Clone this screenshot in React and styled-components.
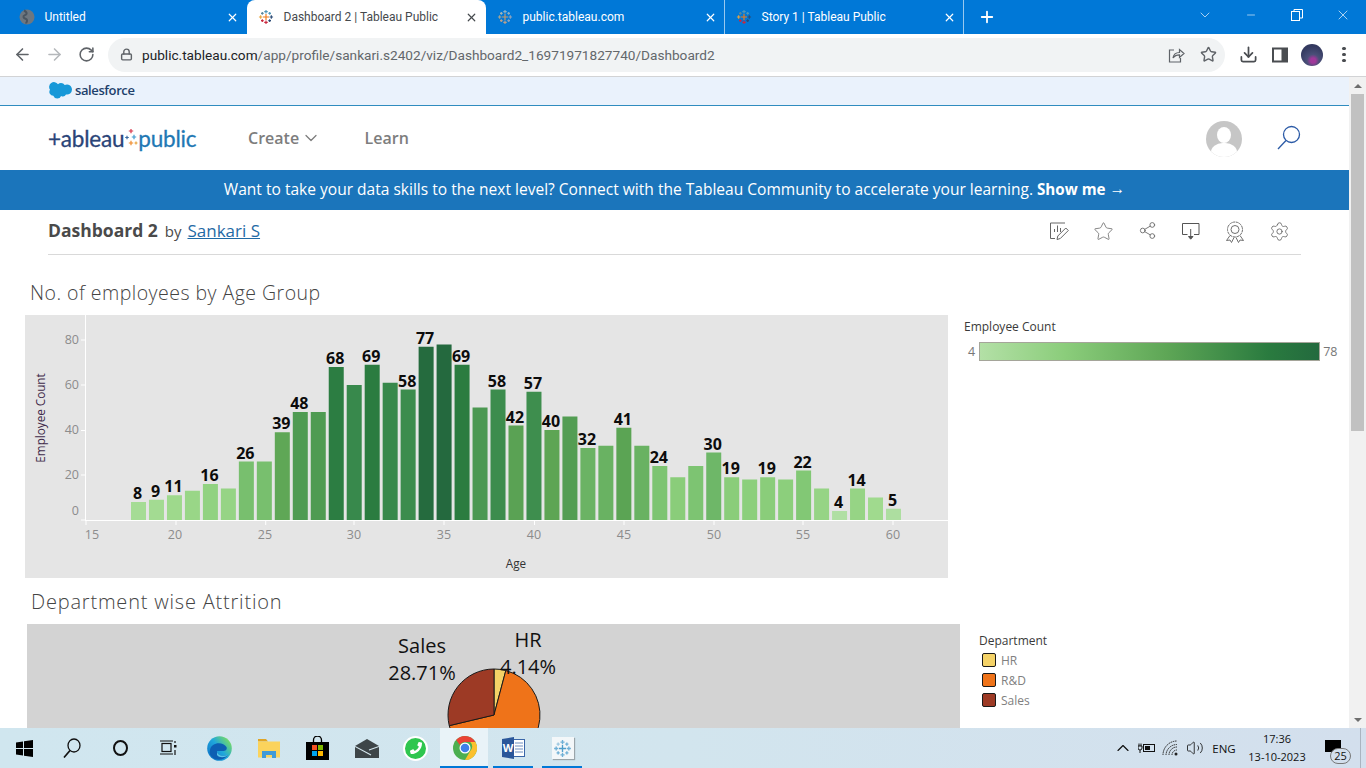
import React from 'react'
import styled, { createGlobalStyle } from 'styled-components'
import {
  ArrowLeft,
  ArrowRight,
  RotateCw,
  Lock,
  Star,
  Download,
  X,
  Plus,
  ChevronDown,
  ChevronUp,
  Minus,
  Share2,
  Settings,
  Volume2,
} from 'lucide-react'
import { FaPhoneAlt } from 'react-icons/fa'

const UI_FONT = '"Open Sans", "Noto Sans", sans-serif'

const tabs = [
  { title: 'Untitled', icon: 'globe' },
  { title: 'Dashboard 2 | Tableau Public', icon: 'color', active: true },
  { title: 'public.tableau.com', icon: 'muted', divider: true },
  { title: 'Story 1 | Tableau Public', icon: 'color', divider: true },
]

const ages = [
  8, 9, 11, 13, 16, 14, 26, 26, 39, 48, 48, 68, 60, 69, 61, 58, 77, 78, 69, 50, 58, 42, 57, 40, 46,
  32, 33, 41, 33, 24, 19, 24, 30, 19, 18, 19, 18, 22, 14, 4, 14, 10, 5,
]
const labelled = [18, 19, 20, 22, 24, 26, 27, 29, 31, 33, 34, 36, 38, 39, 40, 41, 43, 45, 47, 50, 51, 53, 55, 57, 58, 60]

const scale = [
  [4, [176, 223, 163]],
  [10, [160, 218, 142]],
  [20, [135, 204, 120]],
  [30, [110, 183, 104]],
  [40, [93, 165, 84]],
  [50, [76, 152, 82]],
  [60, [56, 137, 76]],
  [70, [41, 122, 63]],
  [78, [36, 105, 62]],
]

const colorFor = (v) => {
  for (let i = 1; i < scale.length; i++) {
    if (v <= scale[i][0]) {
      const [v0, c0] = scale[i - 1]
      const [v1, c1] = scale[i]
      const t = (v - v0) / (v1 - v0)
      return `rgb(${c0.map((c, k) => Math.round(c + (c1[k] - c) * t)).join(',')})`
    }
  }
  return 'rgb(36,105,62)'
}

const xTicks = [
  [15, 61, 67],
  [20, 151, 150],
  [25, 240.7, 240],
  [30, 329, 329],
  [35, 419, 419],
  [40, 509.5, 509],
  [45, 599, 599],
  [50, 689, 689],
  [55, 778, 778],
  [60, 868, 868],
]
const yTicks = [
  [80, 25, 24],
  [60, 70, 69],
  [40, 115.5, 114],
  [20, 160, 159],
  [0, 205, 195],
]

const AgeChart = () => (
  <ChartSvg width="923" height="263" viewBox="0 0 923 263">
    <line x1="60.5" y1="0" x2="60.5" y2="205" stroke="#fff" />
    <line x1="60" y1="205.5" x2="923" y2="205.5" stroke="#fff" />
    {xTicks.map(([label, tick, text]) => (
      <g key={label}>
        <line x1={tick} y1="205" x2={tick} y2="210" stroke="#fff" />
        <TickLabel x={text} y="224" textAnchor="middle">{label}</TickLabel>
      </g>
    ))}
    {yTicks.map(([label, tick, text]) => (
      <g key={label}>
        <line x1="56" y1={tick} x2="60" y2={tick} stroke="#fff" />
        <TickLabel x="54" y={text + 4.5} textAnchor="end">{label}</TickLabel>
      </g>
    ))}
    {ages.map((v, i) => {
      const x = 106 + i * 17.976
      const h = v * 2.25
      return <rect key={i} x={x} y={205 - h} width="15" height={h} fill={colorFor(v)} />
    })}
    {ages.map((v, i) =>
      labelled.includes(i + 18) ? (
        <BarLabel key={i} x={106 + i * 17.976 + 6.5} y={205 - v * 2.25 - 3} textAnchor="middle">
          {v}
        </BarLabel>
      ) : null,
    )}
    <AxisTitle x="0" y="0" textAnchor="middle" transform="translate(20 103) rotate(-90)" fill="#3f2b4a">
      Employee Count
    </AxisTitle>
    <AxisTitle x="491" y="253" textAnchor="middle" fill="#333">
      Age
    </AxisTitle>
  </ChartSvg>
)

const wedge = (cx, cy, r, from, to) => {
  const p = (d) => [cx + r * Math.sin((d * Math.PI) / 180), cy - r * Math.cos((d * Math.PI) / 180)]
  const [x0, y0] = p(from)
  const [x1, y1] = p(to)
  return `M${cx} ${cy}L${x0} ${y0}A${r} ${r} 0 ${to - from > 180 ? 1 : 0} 1 ${x1} ${y1}Z`
}

const PieChart = () => (
  <ChartSvg width="933" height="160" viewBox="0 0 933 160">
    <path d={wedge(467, 91, 46, 0, 14.9)} fill="#f4d267" stroke="#1a1a1a" />
    <path d={wedge(467, 91, 46, 14.9, 256.6)} fill="#ef7319" stroke="#1a1a1a" />
    <path d={wedge(467, 91, 46, 256.6, 360)} fill="#9d3a25" stroke="#1a1a1a" />
    <PieLabel x="395" y="29" textAnchor="middle">Sales</PieLabel>
    <PieLabel x="395" y="56" textAnchor="middle">28.71%</PieLabel>
    <PieLabel x="501" y="23" textAnchor="middle">HR</PieLabel>
    <PieLabel x="501" y="50" textAnchor="middle">4.14%</PieLabel>
  </ChartSvg>
)

const crossSpots = [
  [12, 12, 4.5, 0],
  [12, 4, 2.6, 1],
  [12, 20, 2.6, 2],
  [4, 12, 2.6, 3],
  [20, 12, 2.6, 4],
  [6.5, 6.5, 2, 5],
  [17.5, 6.5, 2, 1],
  [6.5, 17.5, 2, 2],
  [17.5, 17.5, 2, 4],
]

const TableauMark = ({ size = 16, palette }) => (
  <svg width={size} height={size} viewBox="0 0 24 24" fill="none" strokeWidth="1.7">
    {crossSpots.map(([x, y, r, c]) => (
      <path key={`${x}-${y}`} d={`M${x - r} ${y}H${x + r}M${x} ${y - r}V${y + r}`} stroke={palette[c]} />
    ))}
  </svg>
)

const colorPalette = ['#ef7a1a', '#4f97b8', '#c9283e', '#e8a33d', '#2a4a75', '#59879b']
const mutedPalette = ['#c79a6b', '#8db0c4', '#b9a08c', '#a9a68f', '#8da3bd', '#a5b5b5']
const bluePalette = ['#4f9ecb', '#6fb0d6', '#6fb0d6', '#6fb0d6', '#6fb0d6', '#9cc7e0']

const TabIcon = ({ kind }) => {
  if (kind === 'globe') {
    return (
      <svg width="16" height="16" viewBox="0 0 16 16">
        <circle cx="8" cy="8" r="7.5" fill="#6e7780" />
        <path d="M5 1.5c2 1 3 2 2.5 3.5S4 6 4.5 8s3 1.5 3.5 3-1 3-1 3.5" stroke="#4a5560" fill="none" strokeWidth="2" />
      </svg>
    )
  }
  return <TableauMark palette={kind === 'muted' ? mutedPalette : colorPalette} />
}

const SalesforceCloud = () => (
  <svg width="24" height="17" viewBox="0 0 24 17">
    <path
      d="M10 2.2A4.2 4.2 0 0 1 13 1a4.2 4.2 0 0 1 3.7 2.1A5 5 0 0 1 24 7.6a5 5 0 0 1-6 4.9 3.7 3.7 0 0 1-4.9 1.5A4.2 4.2 0 0 1 5.3 13.8 3.9 3.9 0 0 1 2 7.8a4.5 4.5 0 0 1 8-5.6z"
      fill="#1798d8"
    />
  </svg>
)

const logoSpark = [
  [7, 2, 2.2, '#d8354a'],
  [3, 8.5, 1.8, '#3b6aa0'],
  [10, 8, 2.2, '#3f9bd0'],
  [7, 14, 2.2, '#ef8a2b'],
  [12, 14, 1.5, '#e8a33d'],
]

const LogoSpark = () => (
  <svg width="14" height="18" viewBox="0 0 14 18" fill="none" strokeWidth="1.2">
    {logoSpark.map(([x, y, r, c]) => (
      <path key={`${x}-${y}`} d={`M${x - r} ${y}H${x + r}M${x} ${y - r}V${y + r}`} stroke={c} />
    ))}
  </svg>
)

const SiteSearchIcon = () => (
  <svg width="24" height="25" viewBox="0 0 24 25" fill="none" stroke="#2b5aa6" strokeWidth="1.3">
    <circle cx="14.5" cy="9.5" r="8" />
    <path d="M9 15.5 1 24" />
  </svg>
)

const EditChartIcon = () => (
  <svg width="20" height="20" viewBox="0 0 20 20" fill="none" stroke="#666" strokeWidth="1">
    <path d="M16 2H1.5v15.5H6" />
    <path d="M5.5 11V8M8.5 11V4.5M11.5 11V7" />
    <path d="M8 18.5l.8-3.5 8-8 2.5 2.5-8 8z" />
  </svg>
)

const ScreenDownloadIcon = () => (
  <svg width="20" height="20" viewBox="0 0 20 20" fill="none" stroke="#555" strokeWidth="1">
    <path d="M6.5 13.5H1.5V2.5h16.5v11h-5" />
    <path d="M9.7 8v9" />
    <path d="M7.5 15.5h4.5L9.7 18.2z" fill="#555" />
  </svg>
)

const RibbonIcon = () => (
  <svg width="20" height="22" viewBox="0 0 20 22" fill="none" stroke="#707070" strokeWidth="1">
    <circle cx="10" cy="8.5" r="7.5" strokeDasharray="3 .6" />
    <circle cx="10" cy="8.5" r="4" />
    <path d="M5 14.5 1.5 19.5l3.5-.5 1.5 2.5 2.5-5" />
    <path d="M15 14.5l3.5 5-3.5-.5-1.5 2.5-2.5-5" />
  </svg>
)

const ChromeShareIcon = () => (
  <svg width="18" height="18" viewBox="0 0 18 18" fill="none" stroke="#5f6368" strokeWidth="1.2">
    <path d="M7 4H2.5v12h11v-4" />
    <path d="M6 12c.5-3.5 3-5.5 6.5-5.5V3.5L17 7.5l-4.5 4V8.8C9.8 8.8 7.5 9.8 6 12z" />
  </svg>
)

const SidePanelIcon = () => (
  <svg width="16" height="16" viewBox="0 0 16 16">
    <rect x="1" y="1.5" width="14" height="13" fill="none" stroke="#4a4d51" strokeWidth="2" />
    <rect x="9.5" y="1.5" width="5" height="13" fill="#4a4d51" />
  </svg>
)

const RestoreIcon = () => (
  <svg width="12" height="12" viewBox="0 0 12 12" fill="none" stroke="#fff" strokeWidth="1">
    <rect x="0.5" y="2.5" width="8" height="9" />
    <path d="M3 2.5V.5h8.5v8.5H8.5" />
  </svg>
)

const WindowsIcon = () => (
  <svg width="17" height="17" viewBox="0 0 17 17" fill="#000">
    <path d="M0 2.5 7 1.5v6.5H0zM8 1.3 17 0v8H8zM0 9h7v6.5l-7-1zM8 9h9v8l-9-1.3z" />
  </svg>
)

const TaskSearchIcon = () => (
  <svg width="18" height="20" viewBox="0 0 18 20" fill="none" stroke="#111" strokeWidth="1.3">
    <ellipse cx="11" cy="7.5" rx="6" ry="6.5" />
    <path d="M7 12.5 1 19.5" strokeWidth="1.7" />
  </svg>
)

const TaskViewIcon = () => (
  <svg width="18" height="18" viewBox="0 0 18 18" fill="none" stroke="#111" strokeWidth="1.2">
    <rect x="3" y="4.5" width="9" height="8" />
    <path d="M1 2h13M1 15h13M16 2v2M16 11v5" />
    <rect x="15" y="6" width="2.5" height="2.5" fill="#111" stroke="none" />
  </svg>
)

const EdgeIcon = () => (
  <svg width="25" height="25" viewBox="0 0 25 25">
    <defs>
      <linearGradient id="edgeFill" x1="0" y1="1" x2="1" y2="0.2">
        <stop offset="0" stopColor="#0d6fc6" />
        <stop offset="0.55" stopColor="#1fa7dc" />
        <stop offset="1" stopColor="#7ee05c" />
      </linearGradient>
    </defs>
    <circle cx="12.5" cy="12.5" r="12.3" fill="url(#edgeFill)" />
    <path d="M3 14C4 6 16 5 19.5 11c1 3-1.5 4-3.5 4h-6c0 4 5 6 11 4-3 5-11 6-15 3-3-2-4-5-3-8z" fill="#0d5fb3" />
    <path d="M10 15c0 4 5 6 11 4-3 3-9 3-11 0z" fill="#5ac4e6" />
  </svg>
)

const FolderIcon = () => (
  <svg width="22" height="20" viewBox="0 0 22 20">
    <path d="M0 1h8l2 2.5H0z" fill="#e0a526" />
    <rect x="0" y="3.5" width="22" height="16" fill="#fbd35c" />
    <path d="M4 13h14v7h-4v-3H8v3H4z" fill="#3f9ad8" />
  </svg>
)

const StoreIcon = () => (
  <svg width="23" height="24" viewBox="0 0 23 24">
    <path d="M7.5 8V4a4 4 0 0 1 8 0v4" stroke="#000" strokeWidth="1.3" fill="none" />
    <rect y="6" width="23" height="18" fill="#000" />
    <rect x="6" y="9" width="5" height="5" fill="#f25022" />
    <rect x="12" y="9" width="5" height="5" fill="#7fba00" />
    <rect x="6" y="15" width="5" height="5" fill="#00a4ef" />
    <rect x="12" y="15" width="5" height="5" fill="#ffb900" />
  </svg>
)

const MailIcon = () => (
  <svg width="24" height="19" viewBox="0 0 24 19">
    <path d="M0 7 12 0l12 7v12H0z" fill="#3d4548" />
    <path d="M0 7.5 16 16M14 11l10-3.5" stroke="#d6e8ef" strokeWidth="1.1" fill="none" />
  </svg>
)

const ChromeIcon = () => (
  <svg width="24" height="24" viewBox="0 0 24 24">
    <circle cx="12" cy="12" r="12" fill="#4caf50" />
    <path d="M12 0a12 12 0 0 1 10.4 6H12a6 6 0 0 0-5.2 3L3.200 3.900A12 12 0 0 1 12 0z" fill="#ea4335" />
    <path d="M22.4 6A12 12 0 0 1 12 24l5.2-9a6 6 0 0 0 0-9z" fill="#fbc02d" />
    <circle cx="12" cy="12" r="5.5" fill="#fff" />
    <circle cx="12" cy="12" r="4.3" fill="#3f7fe8" />
  </svg>
)

const WordIcon = () => (
  <svg width="23" height="22" viewBox="0 0 23 22">
    <rect x="11" y="2.5" width="11.5" height="17" fill="#fff" stroke="#3a66a8" />
    <path d="M13 6h8M13 9h8M13 12h8M13 15h8" stroke="#6f8fc0" />
    <path d="M0 2 12 0v22L0 20z" fill="#2b579a" />
    <WordLetter x="6" y="15" textAnchor="middle">W</WordLetter>
  </svg>
)

const BatteryIcon = () => (
  <svg width="18" height="16" viewBox="0 0 18 16" fill="none" stroke="#111" strokeWidth="1">
    <rect x="5.5" y="4.5" width="11" height="7" />
    <rect x="7" y="6" width="5" height="4" fill="#111" stroke="none" />
    <path d="M0 6h4v2a2 2 0 0 1-4 0zM1 3.5V6M3 3.5V6M2 10v3" />
  </svg>
)

const WifiIcon = () => (
  <svg width="18" height="16" viewBox="0 0 18 16" fill="none" stroke="#222" strokeWidth="1" strokeDasharray="1.5 .7">
    <path d="M1 15a14 14 0 0 1 14-14M4 15A11 11 0 0 1 15 4.5M7 15a8 8 0 0 1 8-8M10 15a5 5 0 0 1 5-5" />
    <circle cx="14" cy="14" r="1.5" fill="#222" stroke="none" />
  </svg>
)

const App = () => (
  <>
    <GlobalStyle />
    <Screen>
      <TabStrip>
        {tabs.map((tab) => (
          <Tab key={tab.title} $active={tab.active} $divider={tab.divider}>
            <TabFavicon>
              <TabIcon kind={tab.icon} />
            </TabFavicon>
            <TabTitle>{tab.title}</TabTitle>
            <TabClose>
              <X size={13} strokeWidth={2.2} />
            </TabClose>
          </Tab>
        ))}
        <NewTab>
          <Plus size={18} strokeWidth={2.4} />
        </NewTab>
        <WindowControls>
          <WindowButton>
            <ChevronDown size={16} strokeWidth={1} />
          </WindowButton>
          <WindowButton>
            <Minus size={12} strokeWidth={1.2} />
          </WindowButton>
          <WindowButton>
            <RestoreIcon />
          </WindowButton>
          <WindowButton>
            <X size={16} strokeWidth={1} />
          </WindowButton>
        </WindowControls>
      </TabStrip>

      <Toolbar>
        <NavButton>
          <ArrowLeft size={19} strokeWidth={2} />
        </NavButton>
        <NavButton $disabled>
          <ArrowRight size={19} strokeWidth={2} />
        </NavButton>
        <NavButton>
          <RotateCw size={17} strokeWidth={2.2} />
        </NavButton>
        <Omnibox>
          <Lock size={13} strokeWidth={2.6} color="#5f6368" />
          <UrlText>
            <UrlHost>public.tableau.com</UrlHost>/app/profile/sankari.s2402/viz/Dashboard2_16971971827740/Dashboard2
          </UrlText>
          <OmniActions>
            <ChromeShareIcon />
            <Star size={17} strokeWidth={2} color="#5f6368" />
          </OmniActions>
        </Omnibox>
        <ToolbarIcons>
          <ToolbarIcon>
            <Download size={19} strokeWidth={2.2} color="#4a4d51" />
          </ToolbarIcon>
          <ToolbarIcon>
            <SidePanelIcon />
          </ToolbarIcon>
          <ToolbarIcon>
            <ProfilePhoto />
          </ToolbarIcon>
          <ToolbarIcon>
            <Kebab />
          </ToolbarIcon>
        </ToolbarIcons>
      </Toolbar>

      <Viewport>
        <Page>
          <SalesforceBar>
            <SalesforceCloud />
            <SalesforceName>salesforce</SalesforceName>
          </SalesforceBar>

          <SiteHeader>
            <Logo>
              <LogoWord>+ableau</LogoWord>
              <LogoSpark />
              <LogoWord $light>public</LogoWord>
            </Logo>
            <SiteNav>
              <NavLink>
                Create
                <ChevronDown size={20} strokeWidth={1.5} />
              </NavLink>
              <NavLink>Learn</NavLink>
            </SiteNav>
            <HeaderRight>
              <UserAvatar>
                <UserHead />
                <UserBody />
              </UserAvatar>
              <HeaderSearch>
                <SiteSearchIcon />
              </HeaderSearch>
            </HeaderRight>
          </SiteHeader>

          <Banner>
            Want to take your data skills to the next level? Connect with the Tableau Community to accelerate your learning.
            <strong>Show me</strong>
            <BannerArrow>→</BannerArrow>
          </Banner>

          <TitleRow>
            <VizName>
              <strong>Dashboard 2</strong>
              <By>by</By>
              <AuthorLink href="#">Sankari S</AuthorLink>
            </VizName>
            <VizActions>
              <VizAction>
                <EditChartIcon />
              </VizAction>
              <VizAction>
                <Star size={21} strokeWidth={0.9} />
              </VizAction>
              <VizAction>
                <Share2 size={19} strokeWidth={1.1} />
              </VizAction>
              <VizAction>
                <ScreenDownloadIcon />
              </VizAction>
              <VizAction>
                <RibbonIcon />
              </VizAction>
              <VizAction>
                <Settings size={21} strokeWidth={1} />
              </VizAction>
            </VizActions>
          </TitleRow>

          <SectionTitle>No. of employees by Age Group</SectionTitle>
          <ChartRow>
            <AgePanel>
              <AgeChart />
            </AgePanel>
            <CountLegend>
              <LegendTitle>Employee Count</LegendTitle>
              <RampRow>
                <RampValue>4</RampValue>
                <Ramp />
                <RampValue>78</RampValue>
              </RampRow>
            </CountLegend>
          </ChartRow>

          <SectionTitle $second>Department wise Attrition</SectionTitle>
          <ChartRow>
            <PiePanel>
              <PieChart />
            </PiePanel>
            <DeptLegend>
              <LegendTitle>Department</LegendTitle>
              <LegendItems>
                <LegendItem><Swatch $color="#f4d267" />HR</LegendItem>
                <LegendItem><Swatch $color="#ef7319" />R&amp;D</LegendItem>
                <LegendItem><Swatch $color="#9d3a25" />Sales</LegendItem>
              </LegendItems>
            </DeptLegend>
          </ChartRow>
        </Page>
        <Scrollbar>
          <ScrollArrow />
          <ScrollThumb />
          <ScrollArrow $down />
        </Scrollbar>
      </Viewport>

      <Taskbar>
        <TaskSlot $narrow><WindowsIcon /></TaskSlot>
        <TaskSlot $narrow><TaskSearchIcon /></TaskSlot>
        <TaskSlot $narrow><CortanaRing /></TaskSlot>
        <TaskSlot $narrow><TaskViewIcon /></TaskSlot>
        <TaskGap />
        <TaskSlot><EdgeIcon /></TaskSlot>
        <TaskSlot><FolderIcon /></TaskSlot>
        <TaskSlot><StoreIcon /></TaskSlot>
        <TaskSlot><MailIcon /></TaskSlot>
        <TaskSlot>
          <WhatsAppBadge>
            <FaPhoneAlt />
          </WhatsAppBadge>
        </TaskSlot>
        <TaskSlot $open $active><ChromeIcon /></TaskSlot>
        <TaskSlot $open><WordIcon /></TaskSlot>
        <TaskSlot $open>
          <TableauTile>
            <TableauMark size={19} palette={bluePalette} />
          </TableauTile>
        </TaskSlot>
        <Tray>
          <TrayItem><ChevronUp size={20} strokeWidth={1.4} /></TrayItem>
          <TrayItem><BatteryIcon /></TrayItem>
          <TrayItem><WifiIcon /></TrayItem>
          <TrayItem><Volume2 size={18} strokeWidth={1.1} /></TrayItem>
          <TrayText>ENG</TrayText>
          <Clock>
            <span>17:36</span>
            <span>13-10-2023</span>
          </Clock>
          <Notify>
            <NotifyBubble />
            <NotifyCount>25</NotifyCount>
          </Notify>
        </Tray>
      </Taskbar>
    </Screen>
  </>
)

export default App

const GlobalStyle = createGlobalStyle`
  html, body {
    margin: 0;
    padding: 0;
    background: #fff;
    overflow: hidden;
  }
  * {
    box-sizing: border-box;
  }
`

const Screen = styled.div`
  width: 1366px;
  height: 768px;
  display: flex;
  flex-direction: column;
  overflow: hidden;
  font-family: ${UI_FONT};
`

const TabStrip = styled.div`
  height: 34px;
  flex: none;
  display: flex;
  padding-left: 8px;
  background: #0078d7;
`

const Tab = styled.div`
  width: 239px;
  flex: none;
  display: flex;
  align-items: center;
  padding: 0 8px 0 11px;
  color: ${({ $active }) => ($active ? '#45494d' : '#fff')};
  background: ${({ $active }) => ($active ? '#fff' : 'transparent')};
  border-radius: ${({ $active }) => ($active ? '8px 8px 0 0' : '0')};
  box-shadow: ${({ $divider }) => ($divider ? 'inset -1px 0 0 rgba(255, 255, 255, 0.6)' : 'none')};
`

const TabFavicon = styled.span`
  display: flex;
  width: 25.5px;
  flex: none;
`

const TabTitle = styled.span`
  flex: 1;
  font-family: Roboto, sans-serif;
  font-size: 12px;
  white-space: nowrap;
`

const TabClose = styled.span`
  display: flex;
`

const NewTab = styled.div`
  width: 46px;
  display: flex;
  align-items: center;
  justify-content: center;
  color: #fff;
`

const WindowControls = styled.div`
  margin-left: auto;
  display: flex;
  height: 30px;
`

const WindowButton = styled.div`
  width: 46px;
  display: flex;
  align-items: center;
  justify-content: center;
  color: #fff;
`

const Toolbar = styled.div`
  height: 43px;
  flex: none;
  display: flex;
  align-items: center;
  padding: 0 0 1px 6px;
  background: #fff;
  border-bottom: 1px solid #d2d3d5;
`

const NavButton = styled.div`
  width: 32px;
  display: flex;
  justify-content: center;
  color: ${({ $disabled }) => ($disabled ? '#b5b8bb' : '#5f6368')};
`

const Omnibox = styled.div`
  width: 1117px;
  height: 34px;
  margin-left: 6px;
  display: flex;
  align-items: center;
  padding: 0 8px 0 12px;
  border-radius: 17px;
  background: #f1f3f4;
`

const UrlText = styled.div`
  margin-left: 9px;
  font-family: Roboto, sans-serif;
  font-size: 13.63px;
  color: #63676b;
  white-space: nowrap;
`

const UrlHost = styled.span`
  color: #202124;
`

const OmniActions = styled.div`
  margin-left: auto;
  display: flex;
  align-items: center;
  gap: 15px;
`

const ToolbarIcons = styled.div`
  display: flex;
  margin-left: 7px;
`

const ToolbarIcon = styled.div`
  width: 32px;
  display: flex;
  justify-content: center;
  align-items: center;
`

const ProfilePhoto = styled.div`
  width: 22px;
  height: 22px;
  border-radius: 50%;
  background: radial-gradient(circle at 55% 75%, #a0379a 0 12%, #4a4f78 30%, #33395f 70%);
`

const Kebab = styled.div`
  width: 3.5px;
  height: 3.5px;
  border-radius: 50%;
  background: #4a4d51;
  box-shadow: 0 -6px 0 #4a4d51, 0 6px 0 #4a4d51;
`

const Viewport = styled.div`
  flex: 1;
  min-height: 0;
  display: flex;
`

const Page = styled.div`
  flex: 1;
  min-width: 0;
  overflow: hidden;
  background: #fff;
`

const SalesforceBar = styled.div`
  height: 29px;
  display: flex;
  align-items: center;
  gap: 3px;
  padding: 0 0 2px 48px;
  background: #eaf2fc;
  border-bottom: 1px solid #2f8cbf;
`

const SalesforceName = styled.span`
  font-size: 13px;
  font-weight: 600;
  letter-spacing: -0.4px;
  color: #1d3f6b;
`

const SiteHeader = styled.header`
  height: 64px;
  display: flex;
  align-items: center;
  padding: 0 48px;
`

const Logo = styled.div`
  width: 200px;
  display: flex;
  align-items: center;
`

const LogoWord = styled.span`
  font-family: Lato, sans-serif;
  font-size: 22.5px;
  letter-spacing: -0.2px;
  -webkit-text-stroke: 0.3px currentColor;
  color: ${({ $light }) => ($light ? '#1f78b4' : '#2a4478')};
`

const SiteNav = styled.nav`
  display: flex;
  gap: 43.5px;
`

const NavLink = styled.a`
  display: flex;
  align-items: center;
  gap: 2px;
  font-size: 16px;
  font-weight: 600;
  color: #7d7d7d;
`

const HeaderRight = styled.div`
  margin-left: auto;
  display: flex;
  align-items: center;
  gap: 35px;
`

const UserAvatar = styled.div`
  position: relative;
  width: 36px;
  height: 36px;
  margin-top: 2px;
  border-radius: 50%;
  overflow: hidden;
  background: #c6c6c6;
`

const UserHead = styled.div`
  position: absolute;
  left: 11px;
  top: 6px;
  width: 14px;
  height: 16px;
  border-radius: 50%;
  background: #fff;
`

const UserBody = styled.div`
  position: absolute;
  left: 5px;
  top: 22px;
  width: 26px;
  height: 20px;
  border-radius: 45% 45% 0 0;
  background: #fff;
`

const HeaderSearch = styled.div`
  display: flex;
  margin-bottom: 2px;
`

const Banner = styled.div`
  height: 40px;
  display: flex;
  align-items: center;
  justify-content: center;
  padding-bottom: 2px;
  background: #1b75bb;
  color: #fff;
  font-size: 15.55px;
  white-space: nowrap;

  strong {
    margin-left: 4px;
    font-size: 15.2px;
    font-weight: 700;
  }
`

const BannerArrow = styled.span`
  margin-left: 4px;
  font-family: "Liberation Sans", sans-serif;
`

const TitleRow = styled.div`
  height: 45px;
  margin: 0 48px;
  display: flex;
  align-items: center;
  justify-content: space-between;
  border-bottom: 1px solid #d9d9d9;
`

const VizName = styled.div`
  display: flex;
  align-items: baseline;
  padding-bottom: 4px;
  color: #4a4a4a;

  strong {
    font-size: 17.5px;
    font-weight: 700;
  }
`

const By = styled.span`
  margin-left: 7px;
  font-size: 15px;
`

const AuthorLink = styled.a`
  margin-left: 6px;
  font-size: 17px;
  color: #1f6aa5;
  text-decoration: underline;
`

const VizActions = styled.div`
  display: flex;
`

const VizAction = styled.div`
  width: 44px;
  display: flex;
  justify-content: center;
  color: #666;
`

const SectionTitle = styled.h2`
  margin: ${({ $second }) => ($second ? '10px 0 8px 31px' : '24px 0 8px 30px')};
  height: 28px;
  font-size: ${({ $second }) => ($second ? '20px' : '19.5px')};
  letter-spacing: ${({ $second }) => ($second ? '0.8px' : '0.47px')};
  line-height: 28px;
  font-weight: 300;
  color: #444;
`

const ChartRow = styled.div`
  display: flex;
  align-items: flex-start;
`

const AgePanel = styled.div`
  width: 923px;
  height: 263px;
  margin-left: 25px;
  flex: none;
  background: #e5e5e5;
`

const PiePanel = styled.div`
  width: 933px;
  height: 300px;
  margin-left: 27px;
  flex: none;
  background: #d3d3d3;
`

const ChartSvg = styled.svg`
  display: block;
`

const TickLabel = styled.text`
  font-family: ${UI_FONT};
  font-size: 12.5px;
  fill: #8c8c8c;
`

const BarLabel = styled.text`
  font-family: ${UI_FONT};
  font-size: 16px;
  font-weight: 700;
  fill: #0c0c0c;
`

const AxisTitle = styled.text`
  font-family: ${UI_FONT};
  font-size: 11.7px;
`

const PieLabel = styled.text`
  font-family: ${UI_FONT};
  font-size: 20px;
  fill: #111;
`

const WordLetter = styled.text`
  font-family: ${UI_FONT};
  font-size: 11px;
  font-weight: 700;
  fill: #fff;
`

const CountLegend = styled.div`
  margin-left: 16px;
  padding-top: 4px;
`

const DeptLegend = styled.div`
  margin-left: 19px;
  padding-top: 9px;
`

const LegendTitle = styled.div`
  font-size: 12px;
  line-height: 16px;
  color: #3a3a3a;
`

const LegendItems = styled.div`
  margin-top: 1px;
`

const RampRow = styled.div`
  display: flex;
  align-items: center;
  margin-top: 7px;
  margin-left: 4px;
  font-size: 12.5px;
  color: #777;
`

const RampValue = styled.span`
  min-width: 7px;
  margin-right: 4px;

  &:last-child {
    margin: 0 0 0 3px;
  }
`

const Ramp = styled.div`
  width: 341px;
  height: 19px;
  border: 1px solid #a5a59a;
  background: linear-gradient(90deg, #b3e0a6, #8bcd7b 25%, #5ea656 55%, #2a7b3f 85%, #236a3e);
`

const LegendItem = styled.div`
  height: 20px;
  display: flex;
  align-items: center;
  padding-left: 3px;
  font-size: 12px;
  color: #808080;
`

const Swatch = styled.span`
  width: 14px;
  height: 14px;
  margin-right: 5px;
  border: 1px solid #1a1a1a;
  border-radius: 2px;
  background: ${({ $color }) => $color};
`

const Scrollbar = styled.div`
  width: 17px;
  flex: none;
  display: flex;
  flex-direction: column;
  background: #f1f1f1;
`

const ScrollArrow = styled.div`
  height: 17px;
  flex: none;
  margin-top: ${({ $down }) => ($down ? 'auto' : '0')};
  display: flex;
  align-items: center;
  justify-content: center;

  &::before {
    content: '';
    border-left: 4px solid transparent;
    border-right: 4px solid transparent;
    border-${({ $down }) => ($down ? 'top' : 'bottom')}: 4px solid #6e6e6e;
  }
`

const ScrollThumb = styled.div`
  height: 337px;
  margin: 0 2px;
  background: #c1c1c1;
`

const Taskbar = styled.footer`
  height: 40px;
  flex: none;
  display: flex;
  background: linear-gradient(90deg, #d0e6ef, #d2e5ee 50%, #d3dfed);
`

const TaskSlot = styled.div`
  position: relative;
  width: ${({ $narrow }) => ($narrow ? '48px' : '49px')};
  flex: none;
  display: flex;
  align-items: center;
  justify-content: center;
  background: ${({ $active }) => ($active ? 'linear-gradient(90deg, #e9f3f8 48px, transparent 48px)' : 'none')};

  &::after {
    content: ${({ $open }) => ($open ? "''" : 'none')};
    position: absolute;
    bottom: 0;
    left: ${({ $active }) => ($active ? '0' : '4px')};
    width: ${({ $active }) => ($active ? '48px' : '40px')};
    height: 2px;
    background: #0078d7;
  }
`

const TaskGap = styled.div`
  width: 3px;
  flex: none;
`

const CortanaRing = styled.div`
  width: 15px;
  height: 16px;
  border: 2.5px solid #111;
  border-radius: 50%;
`

const WhatsAppBadge = styled.span`
  display: flex;
  align-items: center;
  justify-content: center;
  width: 25px;
  height: 25px;
  border: 2.5px solid #fff;
  border-radius: 50%;
  background: #2fc64f;
  color: #fff;
  font-size: 12px;

  svg {
    transform: scaleX(-1);
  }
`

const TableauTile = styled.div`
  width: 22px;
  height: 22px;
  display: flex;
  align-items: center;
  justify-content: center;
  background: #f3f7f9;
  box-shadow: 1px 1px 1px #9aa5aa;
`

const Tray = styled.div`
  margin-left: auto;
  display: flex;
  align-items: center;
  padding-right: 5px;
  color: #111;
`

const TrayItem = styled.div`
  width: 24px;
  display: flex;
  justify-content: center;
`

const TrayText = styled.div`
  width: 34px;
  font-size: 11.5px;
  text-align: center;
`

const Clock = styled.div`
  width: 72px;
  display: flex;
  flex-direction: column;
  align-items: center;
  font-size: 11px;
  line-height: 18px;
`

const Notify = styled.div`
  position: relative;
  width: 44px;
  height: 40px;
  margin-left: 4px;
  border-right: 1px solid #a9b4c0;
`

const NotifyBubble = styled.div`
  position: absolute;
  left: 8px;
  top: 12px;
  width: 16px;
  height: 12px;
  background: #000;
`

const NotifyCount = styled.div`
  position: absolute;
  left: 13px;
  top: 20px;
  width: 21px;
  height: 16px;
  border: 1px solid #777;
  border-radius: 8px;
  background: #d3dfed;
  font-size: 11px;
  line-height: 14px;
  text-align: center;
`
